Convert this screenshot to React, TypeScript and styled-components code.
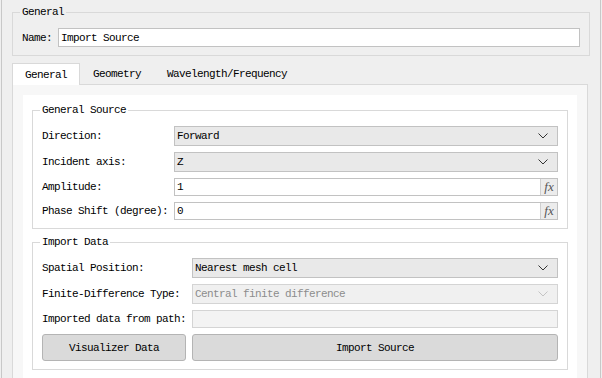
import React from "react";
import styled, { createGlobalStyle } from "styled-components";

const Global = createGlobalStyle`
  html, body { margin: 0; padding: 0; background: #efefef; }
  body {
    font-family: "Liberation Mono", "DejaVu Sans Mono", monospace;
    font-size: 11px;
    letter-spacing: -0.6px;
    line-height: 12px;
    color: #000;
  }
  * { box-sizing: border-box; }
`;

const Window = styled.div`
  width: 600px;
  height: 378px;
  margin-left: 1px;
  border-left: 1px solid #c8c8c8;
  border-right: 1px solid #c8c8c8;
  background: #efefef;
  overflow: hidden;
  padding-top: 6px;
`;

const GroupBox = styled.fieldset<{ $mx?: string }>`
  margin: ${(p) => p.$mx ?? "0 10px"};
  border: 1px solid #d9d9d9;
  padding: 10px 9px 8px 9px;
  min-width: 0;
`;

const Legend = styled.legend`
  padding: 0 2px;
  margin-left: -2px;
  line-height: 12px;
`;

const NameRow = styled.div`
  display: flex;
  align-items: center;
  gap: 6px;
`;

const TextField = styled.div<{ $disabled?: boolean; $h?: number }>`
  flex: 1;
  height: ${(p) => p.$h ?? 19}px;
  display: flex;
  align-items: center;
  padding: 0 2px;
  background: ${(p) => (p.$disabled ? "#f3f3f3" : "#ffffff")};
  border: 1px solid ${(p) => (p.$disabled ? "#d4d4d4" : "#c2c2c2")};
  white-space: nowrap;
  overflow: hidden;
`;

const FieldText = styled.span`
  flex: 1;
`;

const FxButton = styled.span`
  width: 17px;
  align-self: stretch;
  margin-right: -2px;
  background: #ececec;
  border-left: 1px solid #cfcfcf;
  display: flex;
  align-items: center;
  justify-content: center;
  font-family: "Liberation Serif", "DejaVu Serif", serif;
  font-style: italic;
  font-size: 13px;
  letter-spacing: 0;
  color: #555;
`;

const Combo = styled.div<{ $disabled?: boolean }>`
  height: 20px;
  display: flex;
  align-items: center;
  padding: 0 2px 0 2px;
  background: ${(p) => (p.$disabled ? "#f0f0f0" : "#e9e9e9")};
  border: 1px solid ${(p) => (p.$disabled ? "#d4d4d4" : "#c2c2c2")};
  color: ${(p) => (p.$disabled ? "#8c8c8c" : "#000")};
  white-space: nowrap;
`;

const Chevron = styled.svg`
  margin-right: 7px;
  flex: none;
`;

const Tabs = styled.div`
  margin: 7px 12px 0 10px;
`;

const TabBar = styled.div`
  display: flex;
  height: 21px;
  position: relative;
  z-index: 1;
`;

const Tab = styled.div<{ $active?: boolean }>`
  height: ${(p) => (p.$active ? 22 : 21)}px;
  padding: 0 12px;
  display: flex;
  align-items: center;
  border: 1px solid ${(p) => (p.$active ? "#d9d9d9" : "transparent")};
  border-bottom: none;
  background: ${(p) => (p.$active ? "#ffffff" : "transparent")};
`;

const Pane = styled.div`
  border: 1px solid #d9d9d9;
  background: #f7f7f7;
  padding: 10px 10px 0 10px;
  height: 320px;
`;

const ScrollArea = styled.div`
  background: #ffffff;
  padding: 9px 9px 0 9px;
  height: 100%;
  display: flex;
  flex-direction: column;
  gap: 7px;
`;

const FormGrid = styled.div`
  display: grid;
  grid-template-columns: auto 1fr;
  column-gap: 6px;
  row-gap: 6px;
  align-items: center;
`;

const Label = styled.span`
  white-space: nowrap;
`;

const Button = styled.div`
  height: 27px;
  display: flex;
  align-items: center;
  justify-content: center;
  background: #dadada;
  border: 1px solid #b4b4b4;
  border-radius: 3px;
`;

const ChevronIcon = ({ disabled }: { disabled?: boolean }) => (
  <Chevron width="10" height="6" viewBox="0 0 10 6">
    <polyline
      points="0.5,0.5 5,5 9.5,0.5"
      fill="none"
      stroke={disabled ? "#c4c4c4" : "#333"}
      strokeWidth="1"
    />
  </Chevron>
);

export default function App() {
  return (
    <>
      <Global />
      <Window>
        <GroupBox>
          <Legend>General</Legend>
          <NameRow>
            <Label>Name:</Label>
            <TextField>
              <FieldText>Import Source</FieldText>
            </TextField>
          </NameRow>
        </GroupBox>

        <Tabs>
          <TabBar>
            <Tab $active>General</Tab>
            <Tab>Geometry</Tab>
            <Tab>Wavelength/Frequency</Tab>
          </TabBar>
          <Pane>
            <ScrollArea>
              <GroupBox $mx="0">
                <Legend>General Source</Legend>
                <FormGrid>
                  <Label>Direction:</Label>
                  <Combo>
                    <FieldText>Forward</FieldText>
                    <ChevronIcon />
                  </Combo>
                  <Label>Incident axis:</Label>
                  <Combo>
                    <FieldText>Z</FieldText>
                    <ChevronIcon />
                  </Combo>
                  <Label>Amplitude:</Label>
                  <TextField $h={18}>
                    <FieldText>1</FieldText>
                    <FxButton>fx</FxButton>
                  </TextField>
                  <Label>Phase Shift (degree):</Label>
                  <TextField $h={18}>
                    <FieldText>0</FieldText>
                    <FxButton>fx</FxButton>
                  </TextField>
                </FormGrid>
              </GroupBox>

              <GroupBox $mx="0">
                <Legend>Import Data</Legend>
                <FormGrid>
                  <Label>Spatial Position:</Label>
                  <Combo>
                    <FieldText>Nearest mesh cell</FieldText>
                    <ChevronIcon />
                  </Combo>
                  <Label>Finite-Difference Type:</Label>
                  <Combo $disabled>
                    <FieldText>Central finite difference</FieldText>
                    <ChevronIcon disabled />
                  </Combo>
                  <Label>Imported data from path:</Label>
                  <TextField $h={18} $disabled />
                  <Button>Visualizer Data</Button>
                  <Button>Import Source</Button>
                </FormGrid>
              </GroupBox>
            </ScrollArea>
          </Pane>
        </Tabs>
      </Window>
    </>
  );
}
